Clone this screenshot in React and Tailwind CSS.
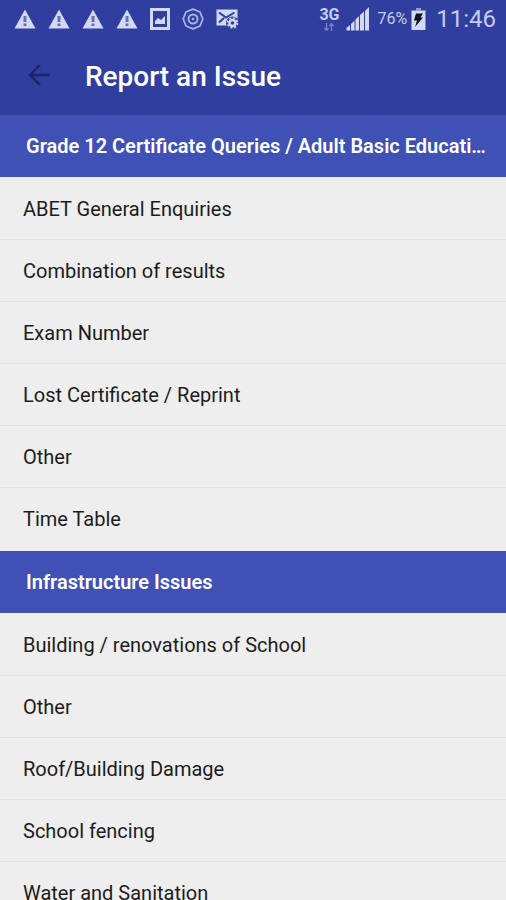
import React from 'react';

const sections = [
  {
    title: 'Grade 12 Certificate Queries / Adult Basic Educati…',
    items: [
      'ABET General Enquiries',
      'Combination of results',
      'Exam Number',
      'Lost Certificate / Reprint',
      'Other',
      'Time Table',
    ],
  },
  {
    title: 'Infrastructure Issues',
    items: [
      'Building / renovations of School',
      'Other',
      'Roof/Building Damage',
      'School fencing',
      'Water and Sanitation',
    ],
  },
];

const WarningIcon = () => (
  <svg width="22" height="20" viewBox="0 0 22 20" aria-hidden="true">
    <path d="M11 0.5 21.5 19.5H0.5Z" fill="#d3d8f3" />
    <path d="M9.5 7h3v6h-3zM9.5 14.5h3V17h-3z" fill="#6670b4" />
  </svg>
);

const PictureIcon = () => (
  <svg width="20" height="22" viewBox="0 0 20 22" aria-hidden="true">
    <rect x="1.5" y="1.5" width="17" height="19" fill="none" stroke="#d3d8f3" strokeWidth="3" />
    <path d="M5 16v-3l3-3 3 2 4-4v8z" fill="#d3d8f3" />
  </svg>
);

const TargetIcon = () => (
  <svg width="22" height="22" viewBox="0 0 22 22" fill="none" stroke="#a9b2e4" aria-hidden="true">
    <path d="M11 1.2l7 2.8 2.8 7-2.8 7-7 2.8-7-2.8-2.8-7L4 4z" strokeWidth="1.8" strokeLinejoin="round" />
    <circle cx="11" cy="11" r="4.5" strokeWidth="2" />
    <circle cx="11" cy="11" r="1.3" fill="#a9b2e4" stroke="none" />
  </svg>
);

const MailSettingsIcon = () => (
  <svg width="23" height="22" viewBox="0 0 23 22" aria-hidden="true">
    <path d="M0.5 1.5h21v16h-21z" fill="#d3d8f3" />
    <path d="M3 4.5l7 5 8.5-5M3 14.5l5-4.5" fill="none" stroke="#303f9f" strokeWidth="2" />
    <circle cx="16.5" cy="15" r="6.5" fill="#303f9f" />
    <circle cx="16.5" cy="15" r="3" fill="none" stroke="#d3d8f3" strokeWidth="2.4" />
    <circle cx="16.5" cy="15" r="4.8" fill="none" stroke="#d3d8f3" strokeWidth="2" strokeDasharray="1.9 1.87" />
  </svg>
);

const NetworkArrowsIcon = () => (
  <svg width="12" height="8" viewBox="0 0 12 8" aria-hidden="true">
    <path d="M3.5 0v7M1.5 5l2 2.5 2-2.5M8.5 8V1M6.5 3l2-2.5 2 2.5" fill="none" stroke="#7783c8" strokeWidth="1.3" />
  </svg>
);

const SignalIcon = () => (
  <svg width="24" height="24" viewBox="0 0 24 24" fill="#d3d8f3" aria-hidden="true">
    <path d="M0.5 23.5V21L4 18v5.5zM5 23.5V17l3.5-3.5v10zM9.5 23.5v-11L13 9v14.5zM14 23.5V8l4-3.5v19zM19 23.5V4l4-4v23.5z" />
  </svg>
);

const BatteryIcon = () => (
  <svg width="15" height="22" viewBox="0 0 15 22" aria-hidden="true">
    <path d="M5 0h5v2.5H5z" fill="#8f99d2" />
    <path d="M0.5 2.5h14V22H0.5z" fill="#d3d8f3" />
    <path d="M5 5.5h7l-2.5 4H12L4 19l2-6.5H3z" fill="#10141f" />
  </svg>
);

const BackIcon = () => (
  <svg width="24" height="24" viewBox="0 0 24 24" aria-hidden="true">
    <path d="M23 10H3M13 0 3 10l10 10" fill="none" stroke="#1d2560" strokeWidth="2.4" />
  </svg>
);

const StatusBar = () => (
  <div className="flex h-[38px] items-center justify-between pr-[10px] pl-[14px] text-[#c5ccf0]">
    <div className="flex items-center gap-3">
      <WarningIcon />
      <WarningIcon />
      <WarningIcon />
      <WarningIcon />
      <PictureIcon />
      <TargetIcon />
      <MailSettingsIcon />
    </div>
    <div className="flex items-center">
      <div className="flex flex-col items-center gap-px">
        <span className="text-[16px] leading-[14px] font-bold">3G</span>
        <NetworkArrowsIcon />
      </div>
      <span className="ml-1.5">
        <SignalIcon />
      </span>
      <span className="ml-2 text-[16px] leading-6">76%</span>
      <span className="ml-1">
        <BatteryIcon />
      </span>
      <span className="ml-2.5 text-[24px] leading-8">11:46</span>
    </div>
  </div>
);

const App = () => {
  return (
    <div className="flex h-screen flex-col bg-[#eeeeee] font-[Roboto,sans-serif]">
      {/* Header */}
      <header className="shrink-0 bg-[#303f9f]">
        <StatusBar />
        <div className="flex h-[77px] items-center gap-[34px] px-[27px]">
          <button type="button" aria-label="Back">
            <BackIcon />
          </button>
          <h1 className="text-[28px] leading-8 font-medium text-white">Report an Issue</h1>
        </div>
      </header>

      {/* Issue categories */}
      <main className="min-h-0 flex-1 overflow-y-auto [scrollbar-width:none]">
        {sections.map((section) => (
          <section key={section.title}>
            <div className="flex h-[62px] items-center bg-[#3f51b5] pr-3 pl-[26px]">
              <h2 className="truncate text-[20px] leading-7 font-semibold text-white">{section.title}</h2>
            </div>
            <ul className="divide-y divide-[#e2e2e2] py-px">
              {section.items.map((item) => (
                <li key={item} className="h-[62px]">
                  <button
                    type="button"
                    className="h-full w-full truncate px-[23px] text-left text-[20px] leading-7 text-[#1c1c1c]"
                  >
                    {item}
                  </button>
                </li>
              ))}
            </ul>
          </section>
        ))}
      </main>
    </div>
  );
};

export default App;
